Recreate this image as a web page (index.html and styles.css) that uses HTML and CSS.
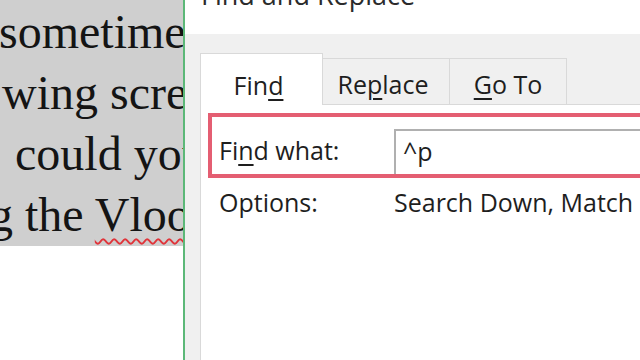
FILE: index.html
```html
<!DOCTYPE html>
<html>
<head>
<meta charset="utf-8">
<link rel="stylesheet" href="styles.css">
</head>
<body>
<div class="screen">
  <div class="doc">
    <div class="page">
      <div class="line l1">sometimes</div>
      <div class="line l2">wing screen</div>
      <div class="line l3">could you</div>
      <div class="line l4">g the <span class="spell">Vlookup</span></div>
    </div>
  </div>
  <div class="divider"></div>
  <div class="dialog">
    <div class="titlebar"><span class="title">Find and Replace</span></div>
    <div class="body">
      <div class="tabs">
        <div class="tab active">Fin<u>d</u></div>
        <div class="tab t2">Re<u>p</u>lace</div>
        <div class="tab t3"><u>G</u>o To</div>
      </div>
      <div class="panel">
        <div class="findrow">
          <div class="label">Fi<u>n</u>d what:</div>
          <div class="input">^p</div>
        </div>
        <div class="options">
          <div class="label">Options:</div>
          <div class="value">Search Down, Match Case</div>
        </div>
      </div>
    </div>
  </div>
</div>
</body>
</html>
```

FILE: styles.css
```css
html, body {
  margin: 0;
  padding: 0;
  background: #ffffff;
}
.screen {
  width: 640px;
  height: 360px;
  display: flex;
  overflow: hidden;
}
.doc {
  width: 183px;
  flex: none;
  background: #ffffff;
  overflow: hidden;
}
.page {
  box-sizing: border-box;
  height: 246px;
  padding-top: 1px;
  background: #cfcfcf;
  font-family: "Liberation Serif", "Times New Roman", serif;
  font-size: 48px;
  line-height: 61px;
  color: #141414;
  white-space: nowrap;
  overflow: hidden;
}
.line { white-space: nowrap; }
.l1 { margin-left: -1px; }
.l2 { margin-left: 2px; }
.l3 { margin-left: 15px; }
.l4 { margin-left: -11px; }
.spell {
  text-decoration: underline wavy #e0343a;
  text-decoration-thickness: 2px;
  text-underline-offset: 7px;
}
.divider {
  width: 2px;
  flex: none;
  background: #5cb878;
}
.dialog {
  flex: 1;
  display: flex;
  flex-direction: column;
  font-family: "Open Sans", "Noto Sans", sans-serif;
  color: #1e1e1e;
  min-width: 0;
}
.titlebar {
  height: 34px;
  flex: none;
  background: #ffffff;
  overflow: hidden;
  padding-left: 16px;
}
.title {
  display: block;
  font-size: 27px;
  line-height: 30px;
  margin-top: -20px;
  color: #2b2b2b;
  white-space: nowrap;
}
.body {
  flex: 1;
  background: #f0f0f0;
  padding: 19px 0 0 15px;
  display: flex;
  flex-direction: column;
  overflow: hidden;
}
.tabs {
  display: flex;
  align-items: flex-end;
  height: 51px;
  flex: none;
}
.tab {
  box-sizing: border-box;
  height: 46px;
  border: 1px solid #d9d9d9;
  border-bottom: none;
  background: #f0f0f0;
  font-size: 25px;
  line-height: 30px;
  padding-top: 10px;
  text-align: center;
  white-space: nowrap;
}
.tab u, .label u {
  text-decoration-thickness: 2px;
  text-underline-offset: 4px;
}
.tab.active {
  width: 123px;
  height: 52px;
  background: #ffffff;
  padding-top: 16px;
  padding-right: 6px;
  position: relative;
  margin-bottom: -1px;
  z-index: 1;
}
.tab.t2 { width: 127px; border-left: none; padding-right: 6px; }
.tab.t3 { width: 117px; border-left: none; }
.panel {
  flex: 1;
  background: #ffffff;
  border-top: 1px solid #d9d9d9;
  border-left: 1px solid #d9d9d9;
  padding-top: 8px;
  padding-left: 7px;
  display: flex;
  flex-direction: column;
}
.findrow {
  display: flex;
  align-items: flex-end;
  height: 57px;
  border: 4px solid #e45e72;
  border-right: none;
  padding-left: 7px;
  margin-right: -10px;
}
.label {
  width: 175px;
  flex: none;
  font-size: 25px;
  line-height: 30px;
  white-space: nowrap;
}
.findrow .label {
  align-self: center;
  margin-top: 8px;
}
.input {
  flex: 1;
  height: 43px;
  border-top: 2px solid #b0b0b0;
  border-left: 2px solid #b0b0b0;
  font-size: 25px;
  line-height: 40px;
  padding-left: 7px;
  white-space: nowrap;
}
.options {
  display: flex;
  padding-left: 11px;
  margin-top: 9px;
  white-space: nowrap;
}
.value {
  font-size: 25px;
  line-height: 30px;
  white-space: nowrap;
}
```
